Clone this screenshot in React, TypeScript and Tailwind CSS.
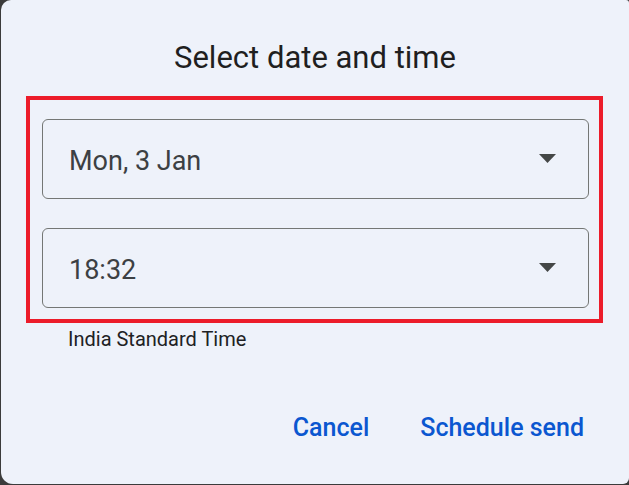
import { ReactNode } from "react";

const font = { fontFamily: "Roboto, 'Noto Sans', sans-serif" };

const SelectField = ({ value }: { value: ReactNode }) => (
    <div className="flex h-[80px] w-[547px] items-center justify-between rounded-[6px] border border-[#747775] pl-[26px] pr-[32px]">
        <span className="pt-1 text-[27px] leading-[32px] text-[#3c4043]">{value}</span>
        <svg width="17" height="9" viewBox="0 0 17 9" className="mt-[-1px]">
            <path d="M0 0 L17 0 L8.5 9 Z" fill="#444746" />
        </svg>
    </div>
);

export default function App() {
    return (
        <div className="h-[485px] w-[629px] bg-[#3b3b3b] pb-px pl-px" style={font}>
            <div className="flex h-full flex-col rounded-tl-[10px] rounded-tr-[3px] rounded-bl-[12px] rounded-br-[6px] bg-[#eef2fa]">
                <h1 className="pt-[39px] text-center text-[31px] leading-[38px] text-[#1f1f1f]">Select date and time</h1>

                <div className="ml-[25px] mt-[19px] flex h-[227px] w-[577px] flex-col gap-[29px] border-4 border-[#ec1c2a] pl-[12px] pt-[19px]">
                    <SelectField value="Mon, 3 Jan" />
                    <SelectField value="18:32" />
                </div>

                <p className="ml-[67px] mt-[4px] text-[20px] leading-[24px] text-[#202124]">India Standard Time</p>

                <div className="mr-[45px] mt-[62px] flex justify-end gap-[51px] text-[25px] font-medium leading-[30px] text-[#0b57d0]">
                    <button>Cancel</button>
                    <button>Schedule send</button>
                </div>
            </div>
        </div>
    );
}
